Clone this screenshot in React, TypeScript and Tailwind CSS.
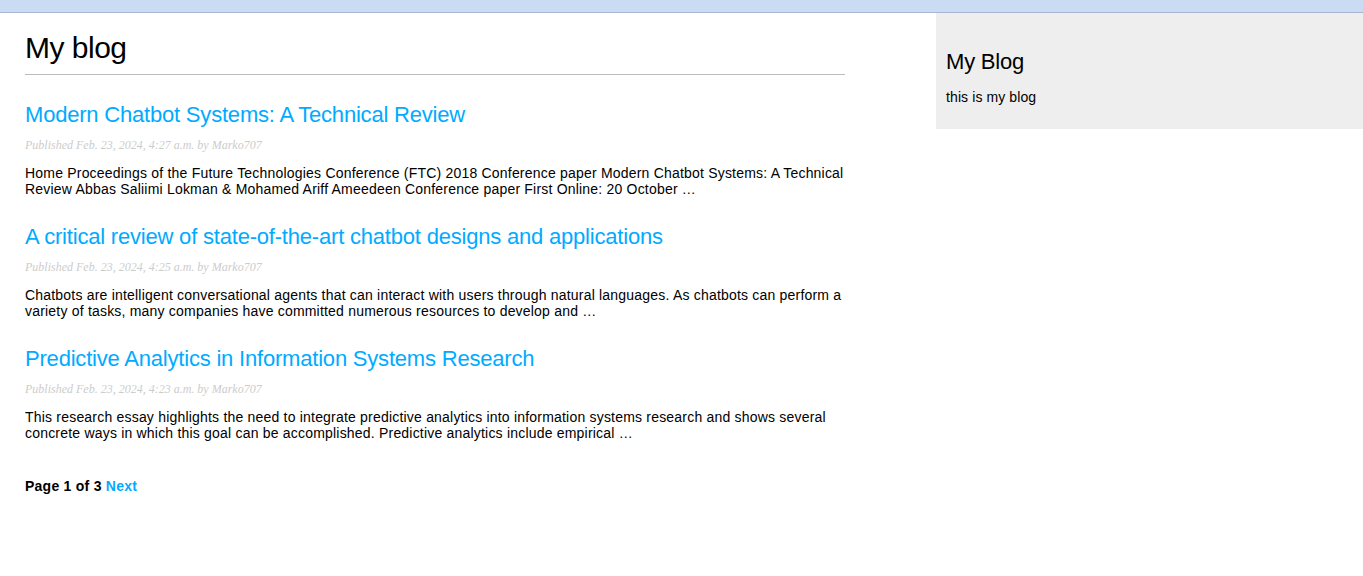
const posts = [
  {
    title: 'Modern Chatbot Systems: A Technical Review',
    date: 'Published Feb. 23, 2024, 4:27 a.m. by Marko707',
    body: 'Home Proceedings of the Future Technologies Conference (FTC) 2018 Conference paper Modern Chatbot Systems: A Technical Review Abbas Saliimi Lokman & Mohamed Ariff Ameedeen Conference paper First Online: 20 October …',
  },
  {
    title: 'A critical review of state-of-the-art chatbot designs and applications',
    date: 'Published Feb. 23, 2024, 4:25 a.m. by Marko707',
    body: 'Chatbots are intelligent conversational agents that can interact with users through natural languages. As chatbots can perform a variety of tasks, many companies have committed numerous resources to develop and …',
  },
  {
    title: 'Predictive Analytics in Information Systems Research',
    date: 'Published Feb. 23, 2024, 4:23 a.m. by Marko707',
    body: 'This research essay highlights the need to integrate predictive analytics into information systems research and shows several concrete ways in which this goal can be accomplished. Predictive analytics include empirical …',
  },
];

export default function App() {
  return (
    <div className="min-h-[576px] bg-white font-['Liberation_Sans',Arial,sans-serif] text-black">
      <div className="h-[13px] bg-[#cadbf4] border-b border-[#a7b6d3]" />

      <div className="flex items-start justify-between">
        {/* Content */}
        <div className="w-[845px] pl-[25px]">
          <h1 className="mt-[18px] pb-[9px] border-b border-[#bbbbbb] text-[30px] leading-[34px] font-normal tracking-[-0.5px]">
            My blog
          </h1>

          {posts.map((post, idx) => (
            <div key={idx} className="mt-[27px]">
              <h2 className="text-[22px] leading-[25px] font-normal tracking-[-0.2px]">
                <a href="#" className="text-[#00abff] no-underline">
                  {post.title}
                </a>
              </h2>
              <p className="mt-[12px] text-[12px] leading-[13px] italic text-[#cccccc] font-['Georgia','Liberation_Serif',serif]">
                {post.date}
              </p>
              <p className="mt-[13px] text-[14px] leading-[16px] tracking-[0.2px]">{post.body}</p>
            </div>
          ))}

          <div className="mt-[37px] text-[14px] leading-[16px] font-bold tracking-[0.25px]">
            Page 1 of 3{' '}
            <a href="#" className="text-[#00abff]">
              Next
            </a>
          </div>
        </div>

        {/* Sidebar */}
        <div className="w-[427px] bg-[#eeeeee] pl-[10px] pr-[10px] pt-[36px] pb-[24px]">
          <h2 className="text-[22px] leading-[25px] font-normal tracking-[-0.2px]">My Blog</h2>
          <p className="mt-[15px] text-[14px] leading-[16px] tracking-[0.1px]">this is my blog</p>
        </div>
      </div>
    </div>
  );
}
